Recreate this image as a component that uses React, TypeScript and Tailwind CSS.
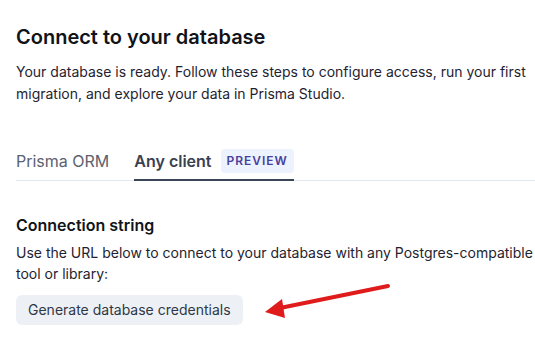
export default function App() {
  return (
    <div
      className="min-h-screen w-full bg-white pl-4 text-[#1a202c]"
      style={{ fontFamily: "Inter, 'Noto Sans', sans-serif" }}
    >
      <h1 className="pt-[23px] text-[20px] font-semibold leading-[28px] text-[#111318]">
        Connect to your database
      </h1>
      <p className="mt-[10px] text-[14px] leading-[22px] text-[#1f2330]">
        Your database is ready. Follow these steps to configure access, run your first migration, and explore your data in Prisma Studio.
      </p>

      {/* Tabs */}
      <div className="mt-[44px] flex items-end border-b border-[#e2e8f0]">
        <button className="mr-[25px] pb-[7px] text-[16px] leading-[24px] text-[#5b6170]">
          Prisma ORM
        </button>
        <div className="-mb-px flex items-center gap-[9px] border-b-2 border-[#3a4557] pb-[6px]">
          <span className="text-[16px] font-semibold leading-[24px] text-[#3a4150]">Any client</span>
          <span className="rounded-[4px] bg-[#ecf3ff] px-[6px] py-[4px] text-[12px] font-semibold leading-[16px] tracking-[0.08em] text-[#4a3f9c]">
            PREVIEW
          </span>
        </div>
      </div>

      {/* Connection string */}
      <h2 className="mt-[32px] text-[16px] font-semibold leading-[24px] text-[#111318]">
        Connection string
      </h2>
      <p className="mt-[5px] text-[14px] leading-[21px] text-[#1f2330]">
        Use the URL below to connect to your database with any Postgres-compatible tool or library:
      </p>
      <div className="relative mt-[11px]">
        <button className="rounded-md bg-[#edf1f5] px-[12px] py-[5px] text-[14px] leading-[20px] text-[#2f3746]">
          Generate database credentials
        </button>
        <svg
          className="pointer-events-none absolute left-[234px] top-[-21px]"
          width="150"
          height="50"
          viewBox="0 0 150 50"
        >
          <line x1="138" y1="12" x2="30" y2="34" stroke="#e01b1b" strokeWidth="4" strokeLinecap="round" />
          <polygon points="15,38 32,25 35,44" fill="#e01b1b" />
        </svg>
      </div>
    </div>
  );
}
